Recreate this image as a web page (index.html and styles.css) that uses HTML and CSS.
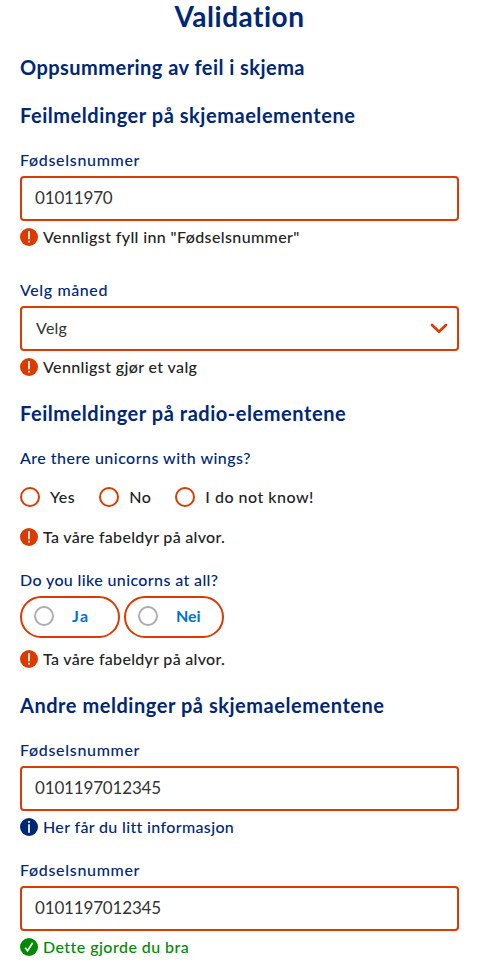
FILE: index.html
```html
<!DOCTYPE html>
<html lang="nb">
<head>
<meta charset="utf-8">
<title>Validation</title>
<link rel="stylesheet" href="styles.css">
</head>
<body>
<main>
  <h1>Validation</h1>
  <h2 class="summary">Oppsummering av feil i skjema</h2>
  <h2>Feilmeldinger på skjemaelementene</h2>

  <section class="field field--wide">
    <div class="label"><span class="label-name">Fødselsnummer</span></div>
    <div class="input"><span>01011970</span></div>
    <div class="message">
      <svg class="icon" viewBox="0 0 18 18"><circle cx="9" cy="9" r="9"/><path class="mark" d="M9 3v8.3M9 12.8v1.8"/></svg>
      <span class="msg-long">Vennligst fyll inn "Fødselsnummer"</span>
    </div>
  </section>

  <section class="field">
    <div class="label"><span class="label-month">Velg måned</span></div>
    <div class="input select"><span>Velg</span>
      <svg class="chevron" viewBox="0 0 18 11"><path d="M2 2l7 6.7L16 2"/></svg>
    </div>
    <div class="message">
      <svg class="icon" viewBox="0 0 18 18"><circle cx="9" cy="9" r="9"/><path class="mark" d="M9 3v8.3M9 12.8v1.8"/></svg>
      <span class="msg-choice">Vennligst gjør et valg</span>
    </div>
  </section>

  <h2 class="next">Feilmeldinger på radio-elementene</h2>

  <section class="field">
    <div class="label"><span class="label-wings">Are there unicorns with wings?</span></div>
    <div class="radios">
      <div class="radio"><i class="dot"></i><span>Yes</span></div>
      <div class="radio"><i class="dot"></i><span>No</span></div>
      <div class="radio"><i class="dot"></i><span>I do not know!</span></div>
    </div>
    <div class="message message--radios">
      <svg class="icon" viewBox="0 0 18 18"><circle cx="9" cy="9" r="9"/><path class="mark" d="M9 3v8.3M9 12.8v1.8"/></svg>
      <span class="msg-fable">Ta våre fabeldyr på alvor.</span>
    </div>
  </section>

  <section class="field">
    <div class="label"><span class="label-like">Do you like unicorns at all?</span></div>
    <div class="pills">
      <div class="pill"><i class="dot dot--grey"></i><span class="yes">Ja</span></div>
      <div class="pill"><i class="dot dot--grey"></i><span>Nei</span></div>
    </div>
    <div class="message message--pills">
      <svg class="icon" viewBox="0 0 18 18"><circle cx="9" cy="9" r="9"/><path class="mark" d="M9 3v8.3M9 12.8v1.8"/></svg>
      <span class="msg-fable">Ta våre fabeldyr på alvor.</span>
    </div>
  </section>

  <h2 class="next">Andre meldinger på skjemaelementene</h2>

  <section class="field">
    <div class="label"><span class="label-name">Fødselsnummer</span></div>
    <div class="input"><span>0101197012345</span></div>
    <div class="message message--info">
      <svg class="icon" viewBox="0 0 18 18"><circle cx="9" cy="9" r="9"/><path class="mark" d="M9 6.2v8.6M9 3v1.8"/></svg>
      <span class="msg-info">Her får du litt informasjon</span>
    </div>
  </section>

  <section class="field">
    <div class="label"><span class="label-name">Fødselsnummer</span></div>
    <div class="input"><span>0101197012345</span></div>
    <div class="message message--success">
      <svg class="icon" viewBox="0 0 18 18"><circle cx="9" cy="9" r="9"/><path class="mark" d="M5.2 9.7l2.3 3.1 5.2-8"/></svg>
      <span class="msg-good">Dette gjorde du bra</span>
    </div>
  </section>
</main>
</body>
</html>
```

FILE: styles.css
```css
* { box-sizing: border-box; }
body {
  margin: 0;
  background: #fff;
  color: #222;
  font: 16px/24px Lato, sans-serif;
  font-variant-ligatures: none;
  overflow: hidden;
}
main { padding: 0 20px; }
h1, h2 { margin: 0; color: #002776; font-weight: 700; }
h1 { font-size: 28px; line-height: 33px; height: 32px; text-align: center; letter-spacing: .5px; }
h2 { margin-top: 24px; font-size: 20px; line-height: 23px; height: 24px; letter-spacing: .54px; white-space: nowrap; }
h2.summary { letter-spacing: .46px; }
h2.next { margin-top: 25px; }
.field { margin-top: 21px; }
h2 + .field { margin-top: 20px; }
.field--wide + .field { margin-top: 31px; }
.label { height: 28px; color: #002776; font-weight: 500; letter-spacing: .6px; }
.label-name { letter-spacing: .68px; }
.label-wings { letter-spacing: .47px; }
.label-like { letter-spacing: .38px; }
.input {
  display: flex;
  align-items: center;
  justify-content: space-between;
  height: 45px;
  padding: 0 9px 2px 13px;
  border: 2px solid #d93b00;
  border-radius: 4px;
  color: #333;
  font-size: 17px;
  font-weight: 400;
  letter-spacing: -.17px;
}
.select { padding-left: 14px; font-size: 16px; letter-spacing: .25px; }
.chevron { width: 18px; height: 11px; margin-top: 2px; fill: none; stroke: #d93b00; stroke-width: 2.7; stroke-linecap: round; }
.message {
  display: flex;
  align-items: center;
  gap: 5px;
  height: 20px;
  margin-top: 6px;
  font-weight: 500;
  white-space: nowrap;
}
.msg-long { letter-spacing: .38px; }
.msg-choice { letter-spacing: .38px; }
.msg-fable { letter-spacing: .3px; }
.msg-info { letter-spacing: .35px; }
.msg-good { letter-spacing: .45px; }
.message--radios { margin-top: 20px; }
.message--pills { margin-top: 11px; }
.message--info { color: #002776; }
.message--success { color: #008a00; }
.icon { width: 18px; height: 18px; fill: #d93b00; }
.message--info .icon { fill: #002776; }
.message--success .icon { fill: #008a00; }
.mark { fill: none; stroke: #fff; stroke-width: 1.7; }
.radios { display: flex; gap: 24px; margin-top: 13px; height: 20px; }
.radio { display: flex; align-items: center; gap: 10px; font-weight: 500; letter-spacing: .5px; }
.dot { width: 20px; height: 20px; border: 2px solid #d93b00; border-radius: 50%; flex: none; }
.dot--grey { border-color: #adadad; }
.pills { display: flex; gap: 4px; }
.pill {
  display: flex;
  align-items: center;
  gap: 18px;
  width: 100px;
  height: 42px;
  padding: 0 12px 2px;
  border: 2px solid #d93b00;
  border-radius: 21px;
  color: #0074d1;
  font-weight: 700;
}
.yes { letter-spacing: 1.5px; }
```
